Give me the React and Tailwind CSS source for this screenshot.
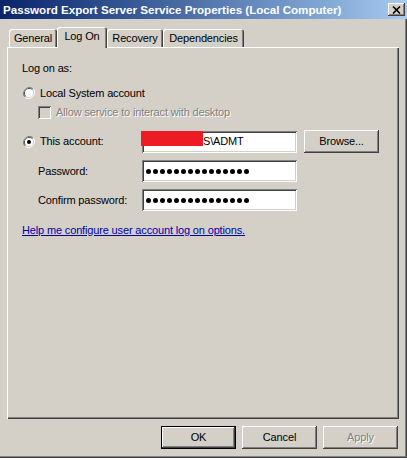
import React from 'react';

const raised =
  'shadow-[inset_-1px_-1px_0_#404040,inset_1px_1px_0_#ffffff,inset_-2px_-2px_0_#808080]';
const sunken =
  'shadow-[inset_1px_1px_0_#808080,inset_-1px_-1px_0_#ffffff,inset_2px_2px_0_#404040,inset_-2px_-2px_0_#d4d0c8]';

const Radio = ({ checked }) => (
  <svg width="12" height="12" viewBox="0 0 12 12" className="shrink-0">
    <path d="M10.2 1.8A6 6 0 0 0 1.8 10.2" stroke="#808080" strokeWidth="1" fill="none" />
    <path d="M9.5 2.5A5 5 0 0 0 2.5 9.5" stroke="#404040" strokeWidth="1" fill="none" />
    <path d="M1.8 10.2A6 6 0 0 0 10.2 1.8" stroke="#ffffff" strokeWidth="1" fill="none" />
    <path d="M2.5 9.5A5 5 0 0 0 9.5 2.5" stroke="#d4d0c8" strokeWidth="1" fill="none" />
    <circle cx="6" cy="6" r="4" fill="#ffffff" />
    {checked && <circle cx="6" cy="6" r="2" fill="#000000" />}
  </svg>
);

const Tab = ({ label, width, active }) => (
  <div
    className={`flex items-center justify-center rounded-t-[3px] bg-[#d4d0c8] shadow-[inset_1px_1px_0_#ffffff,inset_-1px_0_0_#404040,inset_-2px_0_0_#808080] ${
      active ? 'h-[21px] relative z-10 -mb-px' : 'h-[18px]'
    }`}
    style={{ width }}
  >
    <span className={active ? 'pb-[2px]' : ''}>{label}</span>
  </div>
);

const Field = ({ children }) => (
  <div className={`w-[155px] h-[22px] bg-white flex items-center pl-[4px] ${sunken}`}>{children}</div>
);

const Dots = () => (
  <span className="flex gap-[2px]">
    {[...Array(15)].map((_, i) => (
      <span key={i} className="block w-[5px] h-[5px] rounded-full bg-black" />
    ))}
  </span>
);

const Button = ({ children, disabled, isDefault }) => (
  <div
    className={`w-[75px] h-[23px] flex items-center justify-center bg-[#d4d0c8] ${
      isDefault
        ? 'shadow-[inset_0_0_0_1px_#000000,inset_-2px_-2px_0_#404040,inset_2px_2px_0_#ffffff,inset_-3px_-3px_0_#808080]'
        : raised
    } ${disabled ? 'text-[#808080] [text-shadow:1px_1px_0_#ffffff]' : 'text-black'}`}
  >
    {children}
  </div>
);

export default function App() {
  return (
    <div className="w-[407px] h-[460px] bg-white text-[11px] tracking-[-0.15px] text-black font-['Liberation_Sans',Arial,sans-serif] leading-none overflow-hidden">
      <div className="w-[407px] h-[458px] bg-[#d4d0c8] flex flex-col shadow-[inset_-1px_-1px_0_#404040,inset_-2px_-2px_0_#808080]">
        <div className="h-[19px] flex items-center justify-between pl-[3px] pr-[2px] bg-gradient-to-r from-[#0a246a] to-[#a6caf0]">
          <span className="text-white font-bold text-[11.6px] tracking-normal">
            Password Export Server Service Properties (Local Computer)
          </span>
          <div className={`w-[17px] h-[13px] flex items-center justify-center bg-[#d4d0c8] ${raised}`}>
            <svg width="9" height="8" viewBox="0 0 9 8">
              <path d="M1 0.5L8 7.5M8 0.5L1 7.5" stroke="#000" strokeWidth="1.6" />
            </svg>
          </div>
        </div>

        <div className="flex items-end pl-[9px] mt-[8px]">
          <Tab label="General" width={48} />
          <Tab label="Log On" width={50} active />
          <Tab label="Recovery" width={56} />
          <Tab label="Dependencies" width={81} />
        </div>

        <div className="ml-[7px] w-[392px] h-[372px] shadow-[inset_1px_1px_0_#ffffff,inset_-1px_-1px_0_#404040,inset_-2px_-2px_0_#808080] pl-[15px] pt-[14px] flex flex-col">
          <div className="h-[14px] flex items-center">Log on as:</div>

          <div className="h-[14px] flex items-center mt-[11px] gap-[5px] pl-[1px]">
            <Radio />
            <span>Local System account</span>
          </div>

          <div className="h-[14px] flex items-center mt-[5px] pl-[16px] gap-[5px]">
            <div className={`w-[13px] h-[13px] bg-[#d4d0c8] ${sunken}`} />
            <span className="text-[#808080] [text-shadow:1px_1px_0_#ffffff]">
              Allow service to interact with desktop
            </span>
          </div>

          <div className="h-[23px] flex items-center mt-[11px]">
            <div className="w-[120px] flex items-center gap-[5px] pl-[1px]">
              <Radio checked />
              <span>This account:</span>
            </div>
            <Field>
              <span className="w-[62px] h-[15px] bg-[#ed1c24] -ml-[5px] -mt-[7px]" />
              <span>S\ADMT</span>
            </Field>
            <div className="ml-[7px]">
              <Button>Browse...</Button>
            </div>
          </div>

          <div className="h-[22px] flex items-center mt-[7px]">
            <div className="w-[120px] pl-[16px]">Password:</div>
            <Field>
              <Dots />
            </Field>
          </div>

          <div className="h-[22px] flex items-center mt-[7px]">
            <div className="w-[120px] pl-[16px]">Confirm password:</div>
            <Field>
              <Dots />
            </Field>
          </div>

          <div className="h-[14px] flex items-center mt-[12px]">
            <span className="text-[#0000a8] underline">Help me configure user account log on options.</span>
          </div>
        </div>

        <div className="flex justify-end gap-[6px] pr-[9px] mt-[7px]">
          <Button isDefault>OK</Button>
          <Button>Cancel</Button>
          <Button disabled>Apply</Button>
        </div>
      </div>
    </div>
  );
}
